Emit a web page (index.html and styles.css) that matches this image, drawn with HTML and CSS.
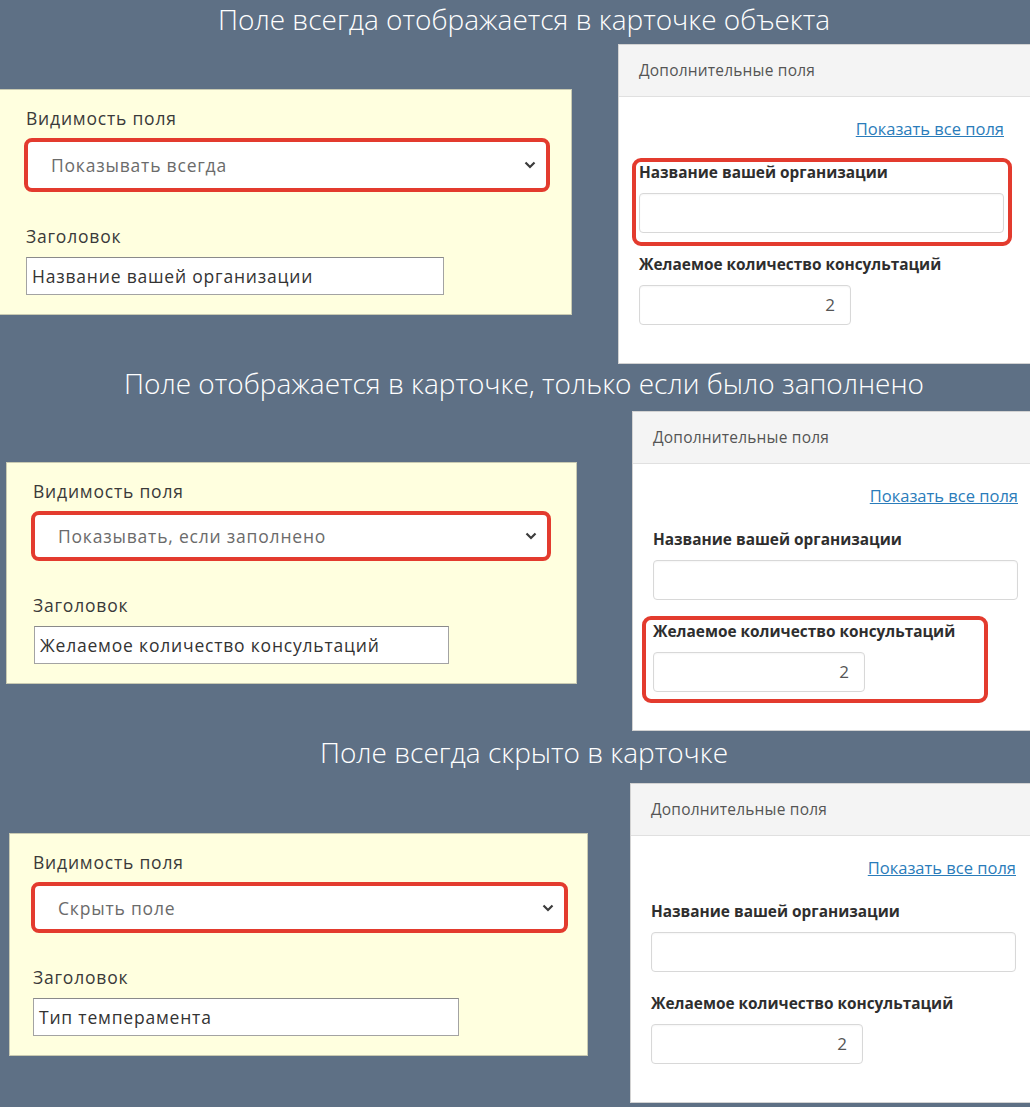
FILE: index.html
```html
<!DOCTYPE html>
<html lang="ru">
<head>
    <meta charset="UTF-8">
    <meta name="viewport" content="width=device-width, initial-scale=1.0">
    <title>Видимость полей</title>
    <link rel="stylesheet" href="styles.css">
</head>
<body>
    <div class="page">
        <!-- 1: always shown -->
        <section class="sec sec-1">
            <h2 class="title">Поле всегда отображается в карточке объекта</h2>
            <div class="row">
                <div class="settings">
                    <div class="set-label">Видимость поля</div>
                    <div class="select">
                        <span>Показывать всегда</span>
                        <svg class="chevron" width="12" height="8" viewBox="0 0 12 8"><path d="M1.5 1.5l4.5 4.5 4.5-4.5" fill="none" stroke="#3c3c3c" stroke-width="2.2"/></svg>
                    </div>
                    <div class="set-label set-label-gap">Заголовок</div>
                    <div class="text-input">Название вашей организации</div>
                </div>
                <div class="card">
                    <div class="card-head">Дополнительные поля</div>
                    <div class="card-body">
                        <div class="show-all"><a href="#">Показать все поля</a></div>
                        <div class="field">
                            <div class="field-label">Название вашей организации</div>
                            <div class="field-input"></div>
                            <span class="mark mark-org"></span>
                        </div>
                        <div class="field">
                            <div class="field-label">Желаемое количество консультаций</div>
                            <div class="field-input num">2</div>
                        </div>
                    </div>
                </div>
            </div>
        </section>

        <!-- 2: shown if filled -->
        <section class="sec sec-2">
            <h2 class="title">Поле отображается в карточке, только если было заполнено</h2>
            <div class="row">
                <div class="settings">
                    <div class="set-label">Видимость поля</div>
                    <div class="select">
                        <span>Показывать, если заполнено</span>
                        <svg class="chevron" width="12" height="8" viewBox="0 0 12 8"><path d="M1.5 1.5l4.5 4.5 4.5-4.5" fill="none" stroke="#3c3c3c" stroke-width="2.2"/></svg>
                    </div>
                    <div class="set-label set-label-gap">Заголовок</div>
                    <div class="text-input">Желаемое количество консультаций</div>
                </div>
                <div class="card">
                    <div class="card-head">Дополнительные поля</div>
                    <div class="card-body">
                        <div class="show-all"><a href="#">Показать все поля</a></div>
                        <div class="field">
                            <div class="field-label">Название вашей организации</div>
                            <div class="field-input"></div>
                        </div>
                        <div class="field">
                            <div class="field-label">Желаемое количество консультаций</div>
                            <div class="field-input num">2</div>
                            <span class="mark mark-count"></span>
                        </div>
                    </div>
                </div>
            </div>
        </section>

        <!-- 3: always hidden -->
        <section class="sec sec-3">
            <h2 class="title">Поле всегда скрыто в карточке</h2>
            <div class="row">
                <div class="settings">
                    <div class="set-label">Видимость поля</div>
                    <div class="select">
                        <span>Скрыть поле</span>
                        <svg class="chevron" width="12" height="8" viewBox="0 0 12 8"><path d="M1.5 1.5l4.5 4.5 4.5-4.5" fill="none" stroke="#3c3c3c" stroke-width="2.2"/></svg>
                    </div>
                    <div class="set-label set-label-gap">Заголовок</div>
                    <div class="text-input">Тип темперамента</div>
                </div>
                <div class="card">
                    <div class="card-head">Дополнительные поля</div>
                    <div class="card-body">
                        <div class="show-all"><a href="#">Показать все поля</a></div>
                        <div class="field">
                            <div class="field-label">Название вашей организации</div>
                            <div class="field-input"></div>
                        </div>
                        <div class="field">
                            <div class="field-label">Желаемое количество консультаций</div>
                            <div class="field-input num">2</div>
                        </div>
                    </div>
                </div>
            </div>
        </section>
    </div>
</body>
</html>
```

FILE: styles.css
```css
body { margin: 0; background: #5e7085; font-family: "Open Sans", "Liberation Sans", sans-serif; }
.page { width: 1030px; height: 1107px; overflow: hidden; }

.title { margin: 0; padding-left: 18px; height: 38px; line-height: 38px; text-align: center; font-size: 28px; font-weight: 300; color: #fff; white-space: nowrap; }
.sec-3 .title { margin-top: 2px; }

.row { display: flex; align-items: flex-start; }
.sec-1 .row { margin-top: 6px; }
.sec-2 .row { margin-top: 9px; }
.sec-3 .row { margin-top: 12px; }

/* left: field settings */
.settings { box-sizing: border-box; background: #ffffdf; border: 1px solid #c9cab2; padding: 17px 0 19px 26px; color: #3a3a3a; font-size: 17.5px; letter-spacing: 0.8px; }
.sec-1 .settings { margin: 45px 0 0 0; width: 572px; border-left: none; }
.sec-2 .settings { margin: 51px 0 0 6px; width: 571px; }
.sec-3 .settings { margin: 50px 0 0 9px; width: 579px; padding-left: 23px; }

.set-label { line-height: 22px; }
.set-label-gap { margin-top: 33px; }

.select { box-sizing: border-box; display: flex; align-items: center; justify-content: space-between; height: 52px; margin: 9px 0 0 -2px; padding: 0 10px 0 23px; background: #fff; border: 4px solid #e33b2e; border-radius: 8px; color: #6b6b6b; }
.sec-1 .select { width: 526px; height: 54px; }
.sec-2 .select { width: 520px; height: 50px; }
.sec-3 .select { width: 537px; height: 51px; }
.chevron { flex: none; }

.text-input { box-sizing: border-box; height: 38px; margin-top: 10px; padding-left: 5px; line-height: 36px; background: #fff; border: 1px solid #a3a3a3; border-top-color: #8a8a8a; color: #333; }
.sec-1 .text-input { width: 418px; }
.sec-2 .text-input { width: 415px; margin-left: 1px; }
.sec-3 .text-input { width: 426px; }

/* right: object card */
.card { flex: 1; background: #fff; border: 1px solid #d2d2d2; border-right: none; }
.sec-1 .card { margin-left: 46px; }
.sec-2 .card { margin-left: 55px; }
.sec-3 .card { margin-left: 42px; }

.card-head { height: 51px; line-height: 51px; padding-left: 20px; background: #f4f4f4; border-bottom: 1px solid #e0e0e0; color: #555; font-size: 15.5px; letter-spacing: 0.2px; }
.card-body { padding: 22px 0 38px 20px; }

.show-all { width: 365px; text-align: right; line-height: 20px; font-size: 16.5px; }
.show-all a { color: #2a7cba; }

.field { position: relative; margin-top: 22px; }
.show-all + .field { margin-top: 24px; }
.field-label { line-height: 20px; margin-bottom: 10px; font-size: 15.4px; font-weight: 700; color: #2e2e2e; }
.field-input { box-sizing: border-box; width: 365px; height: 40px; border: 1px solid #d8d8d8; border-radius: 4px; box-shadow: inset 0 1px 2px rgba(0,0,0,0.04); }
.field-input.num { width: 212px; line-height: 38px; padding-right: 15px; text-align: right; font-size: 17px; color: #555; }

/* red annotation frames */
.mark { position: absolute; box-sizing: border-box; border: 4px solid #e33b2e; border-radius: 9px; }
.mark-org { left: -7px; top: -5px; width: 380px; height: 88px; }
.mark-count { left: -11px; top: -6px; width: 346px; height: 87px; }
```
